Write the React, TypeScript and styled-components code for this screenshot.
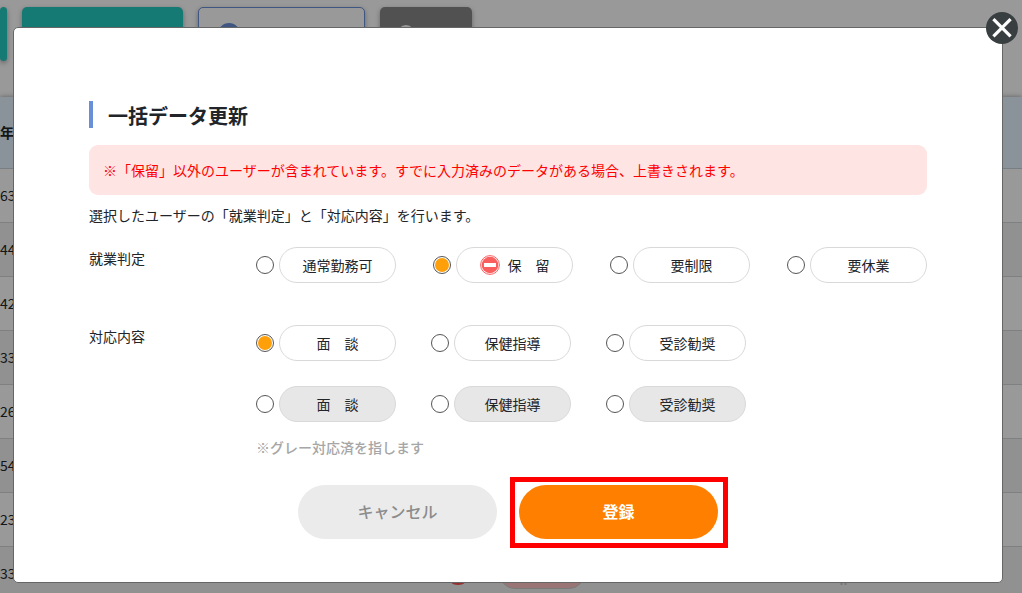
import React from 'react';
import styled, { createGlobalStyle } from 'styled-components';

const GlobalStyle = createGlobalStyle`
  *, *::before, *::after { box-sizing: border-box; }
  body {
    margin: 0;
    overflow: hidden;
    background: #fff;
    color: #212529;
    font-family: "Noto Sans CJK JP", sans-serif;
    font-size: 14px;
    line-height: 20px;
  }
  button, input { font: inherit; }
`;

const Page = styled.main`
  height: 100vh;
  overflow: hidden;
`;

const Toolbar = styled.div`
  display: flex;
  gap: 15px;
  padding-top: 7px;
  margin-bottom: 36px;
`;

const ToolButton = styled.button<{ $tone: 'teal' | 'outline' | 'grey'; $width: number }>`
  display: flex;
  align-items: center;
  justify-content: center;
  gap: 8px;
  flex: none;
  width: ${(p) => p.$width}px;
  height: 54px;
  padding: 0;
  border-radius: 5px;
  border: ${(p) => (p.$tone === 'outline' ? '1px solid #698fd9' : '0')};
  background: ${(p) => ({ teal: '#25cbc2', outline: '#fff', grey: '#888' })[p.$tone]};
  color: ${(p) => (p.$tone === 'outline' ? '#212529' : '#fff')};
  font-size: 16px;
  font-weight: 500;
  box-shadow: 0 2px 5px rgba(0, 0, 0, 0.35);
`;

const List = styled.table`
  width: 100%;
  table-layout: fixed;
  border-collapse: collapse;
  box-shadow: 0 0 5px rgba(0, 0, 0, 0.4);

  th, td {
    padding: 0;
    text-align: left;
    white-space: nowrap;
  }
  th {
    height: 71px;
    background: #e6f6ff;
    border-bottom: 1px solid #c8d4dc;
  }
  td {
    height: 54px;
    border-bottom: 1px solid #d4d6d8;
  }
  tbody tr:nth-child(even) { background: #f2f2f2; }
  svg { display: block; }
`;

const AgeCol = styled.col`width: 446px;`;
const IconCol = styled.col`width: 53px;`;
const StateCol = styled.col`width: 341px;`;

const StatePill = styled.span`
  display: block;
  width: 86px;
  height: 32px;
  border: 1px solid #ccc;
  border-radius: 16px;
  background: #ffc4c4;
`;

const Overlay = styled.div`
  position: fixed;
  inset: 0;
  padding: 27px 19px 10px 13px;
  background: rgba(0, 0, 0, 0.4);
`;

const Dialog = styled.section`
  position: relative;
  display: flex;
  flex-direction: column;
  padding: 73px 75px 43px;
  border: 1px solid #666;
  border-radius: 5px;
  background: #fff;
`;

const CloseButton = styled.button`
  position: absolute;
  top: -16px;
  right: -16px;
  width: 32px;
  height: 32px;
  padding: 0;
  border: 0;
  border-radius: 50%;
  background: #393f41;

  svg { display: block; }
`;

const Title = styled.h1`
  margin: 0 0 17px;
  padding: 3px 0 0 15px;
  border-left: 4px solid #698fd9;
  font-size: 20px;
  line-height: 24px;
  font-weight: 700;
`;

const Warning = styled.p`
  margin: 0 0 10px;
  padding: 15px 14px;
  border-radius: 9px;
  background: #ffe4e4;
  color: #f00;
`;

const Lead = styled.p`
  margin: 0;
`;

const Groups = styled.div`
  display: flex;
  flex-direction: column;
  gap: 42px;
  margin-top: 22px;
`;

const Group = styled.fieldset`
  display: flex;
  min-width: 0;
  margin: 0;
  padding: 0;
  border: 0;
`;

const GroupName = styled.span`
  flex: none;
  width: 167px;
  padding-top: 1px;
`;

const GroupBody = styled.div`
  display: flex;
  flex: 1;
  flex-direction: column;
  gap: 25px;
`;

const Options = styled.div<{ $spread?: boolean }>`
  display: flex;
  justify-content: ${(p) => (p.$spread ? 'space-between' : 'flex-start')};
  gap: 35px;
`;

const Option = styled.label`
  display: flex;
  align-items: center;
  gap: 5px;
`;

const Radio = styled.input`
  appearance: none;
  display: grid;
  place-items: center;
  width: 18px;
  height: 18px;
  margin: 0;
  border: 1px solid #555;
  border-radius: 50%;
  background: #fff;

  &:checked::before {
    content: '';
    width: 14px;
    height: 14px;
    border-radius: 50%;
    background: #ffa00a;
  }
`;

const Pill = styled.span<{ $done?: boolean }>`
  display: flex;
  align-items: center;
  justify-content: center;
  gap: 8px;
  width: 117px;
  height: 36px;
  border: 1px solid #d9d9d9;
  border-radius: 18px;
  background: ${(p) => (p.$done ? '#e7e7e7' : '#fff')};
`;

const Note = styled.p`
  margin: -10px 0 0;
  color: #a6a6a6;
  font-weight: 500;
`;

const Actions = styled.div`
  display: flex;
  justify-content: center;
  gap: 22px;
  margin-top: 28px;
`;

const ActionButton = styled.button<{ $primary?: boolean }>`
  width: 199px;
  height: 54px;
  padding: 0 0 2px;
  border: 0;
  border-radius: 27px;
  background: ${(p) => (p.$primary ? '#ff8000' : '#ebebeb')};
  color: ${(p) => (p.$primary ? '#fff' : '#8c8c8c')};
  font-size: 16px;
  font-weight: ${(p) => (p.$primary ? 700 : 500)};
`;

const Highlight = styled.div`
  position: relative;

  &::after {
    content: '';
    position: absolute;
    inset: -8px -10px -9px -9px;
    border: 5px solid #f00;
    pointer-events: none;
  }
`;

const HoldIcon = () => (
  <svg width="20" height="20" viewBox="0 0 20 20" aria-hidden="true">
    <circle cx="10" cy="10" r="9.4" fill="#fff" stroke="#fa5f5f" strokeWidth="1" />
    <circle cx="10" cy="10" r="8.3" fill="#fa5f5f" />
    <rect x="4" y="8" width="12" height="4" fill="#fff" />
  </svg>
);

const StopIcon = () => (
  <svg width="24" height="26" viewBox="0 0 24 26" aria-hidden="true">
    <circle cx="12" cy="13" r="12" fill="#fa5050" />
    <rect x="5" y="11" width="14" height="4" fill="#fff" />
  </svg>
);

const BarsIcon = () => (
  <svg width="7" height="24" viewBox="0 0 7 24" aria-hidden="true">
    <path d="M1.5 0V24M5.5 0V24" stroke="#c8c8c8" strokeWidth="2" />
  </svg>
);

type Choice = { label: string; checked?: boolean; icon?: boolean };

const judgements: Choice[] = [
  { label: '通常勤務可' },
  { label: '保　留', checked: true, icon: true },
  { label: '要制限' },
  { label: '要休業' },
];

const measures: Choice[] = [
  { label: '面　談', checked: true },
  { label: '保健指導' },
  { label: '受診勧奨' },
];

const ages = [63, 44, 42, 33, 26, 54, 23, 33];

function ChoiceRow({ name, items, done, spread }: { name: string; items: Choice[]; done?: boolean; spread?: boolean }) {
  return (
    <Options $spread={spread}>
      {items.map((c) => (
        <Option key={c.label}>
          <Radio type="radio" name={name} defaultChecked={c.checked && !done} />
          <Pill $done={done}>
            {c.icon && <HoldIcon />}
            {c.label}
          </Pill>
        </Option>
      ))}
    </Options>
  );
}

export default function App() {
  return (
    <>
      <GlobalStyle />
      <Page>
        <Toolbar>
          <ToolButton $tone="teal" $width={7} />
          <ToolButton $tone="teal" $width={161}>
            <svg width="14" height="14" aria-hidden="true"><circle cx="7" cy="7" r="6" fill="#fff" /></svg>
            一括就業判定
          </ToolButton>
          <ToolButton $tone="outline" $width={167}>
            <svg width="22" height="22" aria-hidden="true"><circle cx="11" cy="11" r="11" fill="#698fd9" /></svg>
            ダウンロード
          </ToolButton>
          <ToolButton $tone="grey" $width={92}>
            <svg width="18" height="18" aria-hidden="true"><circle cx="9" cy="9" r="8" fill="none" stroke="#fff" strokeWidth="2" /></svg>
            検索
          </ToolButton>
        </Toolbar>
        <List>
          <colgroup><AgeCol /><IconCol /><StateCol /><col /></colgroup>
          <thead>
            <tr><th>年</th><th /><th /><th /></tr>
          </thead>
          <tbody>
            {ages.map((age, i) => {
              const last = i === ages.length - 1;
              return (
                <tr key={i}>
                  <td>{age}</td>
                  <td>{last && <StopIcon />}</td>
                  <td>{last && <StatePill />}</td>
                  <td>{last && <BarsIcon />}</td>
                </tr>
              );
            })}
          </tbody>
        </List>
      </Page>
      <Overlay>
        <Dialog role="dialog" aria-modal="true" aria-labelledby="dialog-title">
          <CloseButton type="button" aria-label="閉じる">
            <svg width="32" height="32" viewBox="0 0 32 32" aria-hidden="true">
              <path d="M7.4 7.2 24.6 24.4M24.6 7.2 7.4 24.4" stroke="#fff" strokeWidth="3.2" />
            </svg>
          </CloseButton>
          <Title id="dialog-title">一括データ更新</Title>
          <Warning>※「保留」以外のユーザーが含まれています。すでに入力済みのデータがある場合、上書きされます。</Warning>
          <Lead>選択したユーザーの「就業判定」と「対応内容」を行います。</Lead>
          <Groups>
            <Group aria-label="就業判定">
              <GroupName>就業判定</GroupName>
              <GroupBody>
                <ChoiceRow name="judgement" items={judgements} spread />
              </GroupBody>
            </Group>
            <Group aria-label="対応内容">
              <GroupName>対応内容</GroupName>
              <GroupBody>
                <ChoiceRow name="measure" items={measures} />
                <ChoiceRow name="measure" items={measures} done />
                <Note>※グレー対応済を指します</Note>
              </GroupBody>
            </Group>
          </Groups>
          <Actions>
            <ActionButton type="button">キャンセル</ActionButton>
            <Highlight>
              <ActionButton type="button" $primary>登録</ActionButton>
            </Highlight>
          </Actions>
        </Dialog>
      </Overlay>
    </>
  );
}
